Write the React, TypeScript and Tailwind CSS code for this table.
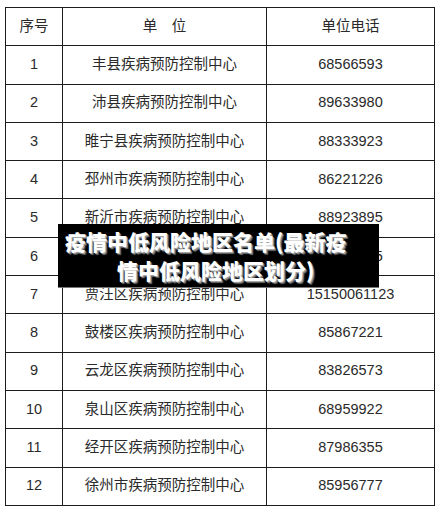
import React from "react";

const rows: [string, string, string][] = [
  ["1", "丰县疾病预防控制中心", "68566593"],
  ["2", "沛县疾病预防控制中心", "89633980"],
  ["3", "睢宁县疾病预防控制中心", "88333923"],
  ["4", "邳州市疾病预防控制中心", "86221226"],
  ["5", "新沂市疾病预防控制中心", "88923895"],
  ["6", "铜山区疾病预防控制中心", "83733165"],
  ["7", "贾汪区疾病预防控制中心", "15150061123"],
  ["8", "鼓楼区疾病预防控制中心", "85867221"],
  ["9", "云龙区疾病预防控制中心", "83826573"],
  ["10", "泉山区疾病预防控制中心", "68959922"],
  ["11", "经开区疾病预防控制中心", "87986355"],
  ["12", "徐州市疾病预防控制中心", "85956777"],
];

const cell =
  "flex items-center justify-center border-r border-b border-[#1c1c1c] text-[14.5px] text-[#2a2a2a]";

export default function App() {
  return (
    <div
      className="relative w-[439px] h-[512px] bg-white overflow-hidden pt-[7px] pl-[5px]"
      style={{ fontFamily: '"Liberation Sans", "Noto Sans CJK SC", sans-serif' }}
    >
      <div className="grid grid-cols-[57px_204px_168px] auto-rows-[38.3px] w-[430px] border-l border-t border-[#1c1c1c]">
        <div className={cell}>序号</div>
        <div className={cell}>单　位</div>
        <div className={cell}>单位电话</div>
        {rows.map(([n, u, p]) => (
          <React.Fragment key={n}>
            <div className={cell}>{n}</div>
            <div className={cell}>{u}</div>
            <div className={cell}>{p}</div>
          </React.Fragment>
        ))}
      </div>

      <div
        className="absolute left-[58px] top-[224px] w-[321px] h-[63px] bg-black flex flex-col justify-center text-white font-black text-[21px] leading-[29px] [text-shadow:1px_1px_0_#a3a3a3,2px_2px_1px_#6b6b6b] shadow-[0_1px_0_#777]"
        style={{ fontFamily: '"Noto Sans CJK SC", sans-serif' }}
      >
        <div className="pl-[7px] whitespace-nowrap">疫情中低风险地区名单(最新疫</div>
        <div className="pl-[59px] whitespace-nowrap">情中低风险地区划分)</div>
      </div>
    </div>
  );
}
